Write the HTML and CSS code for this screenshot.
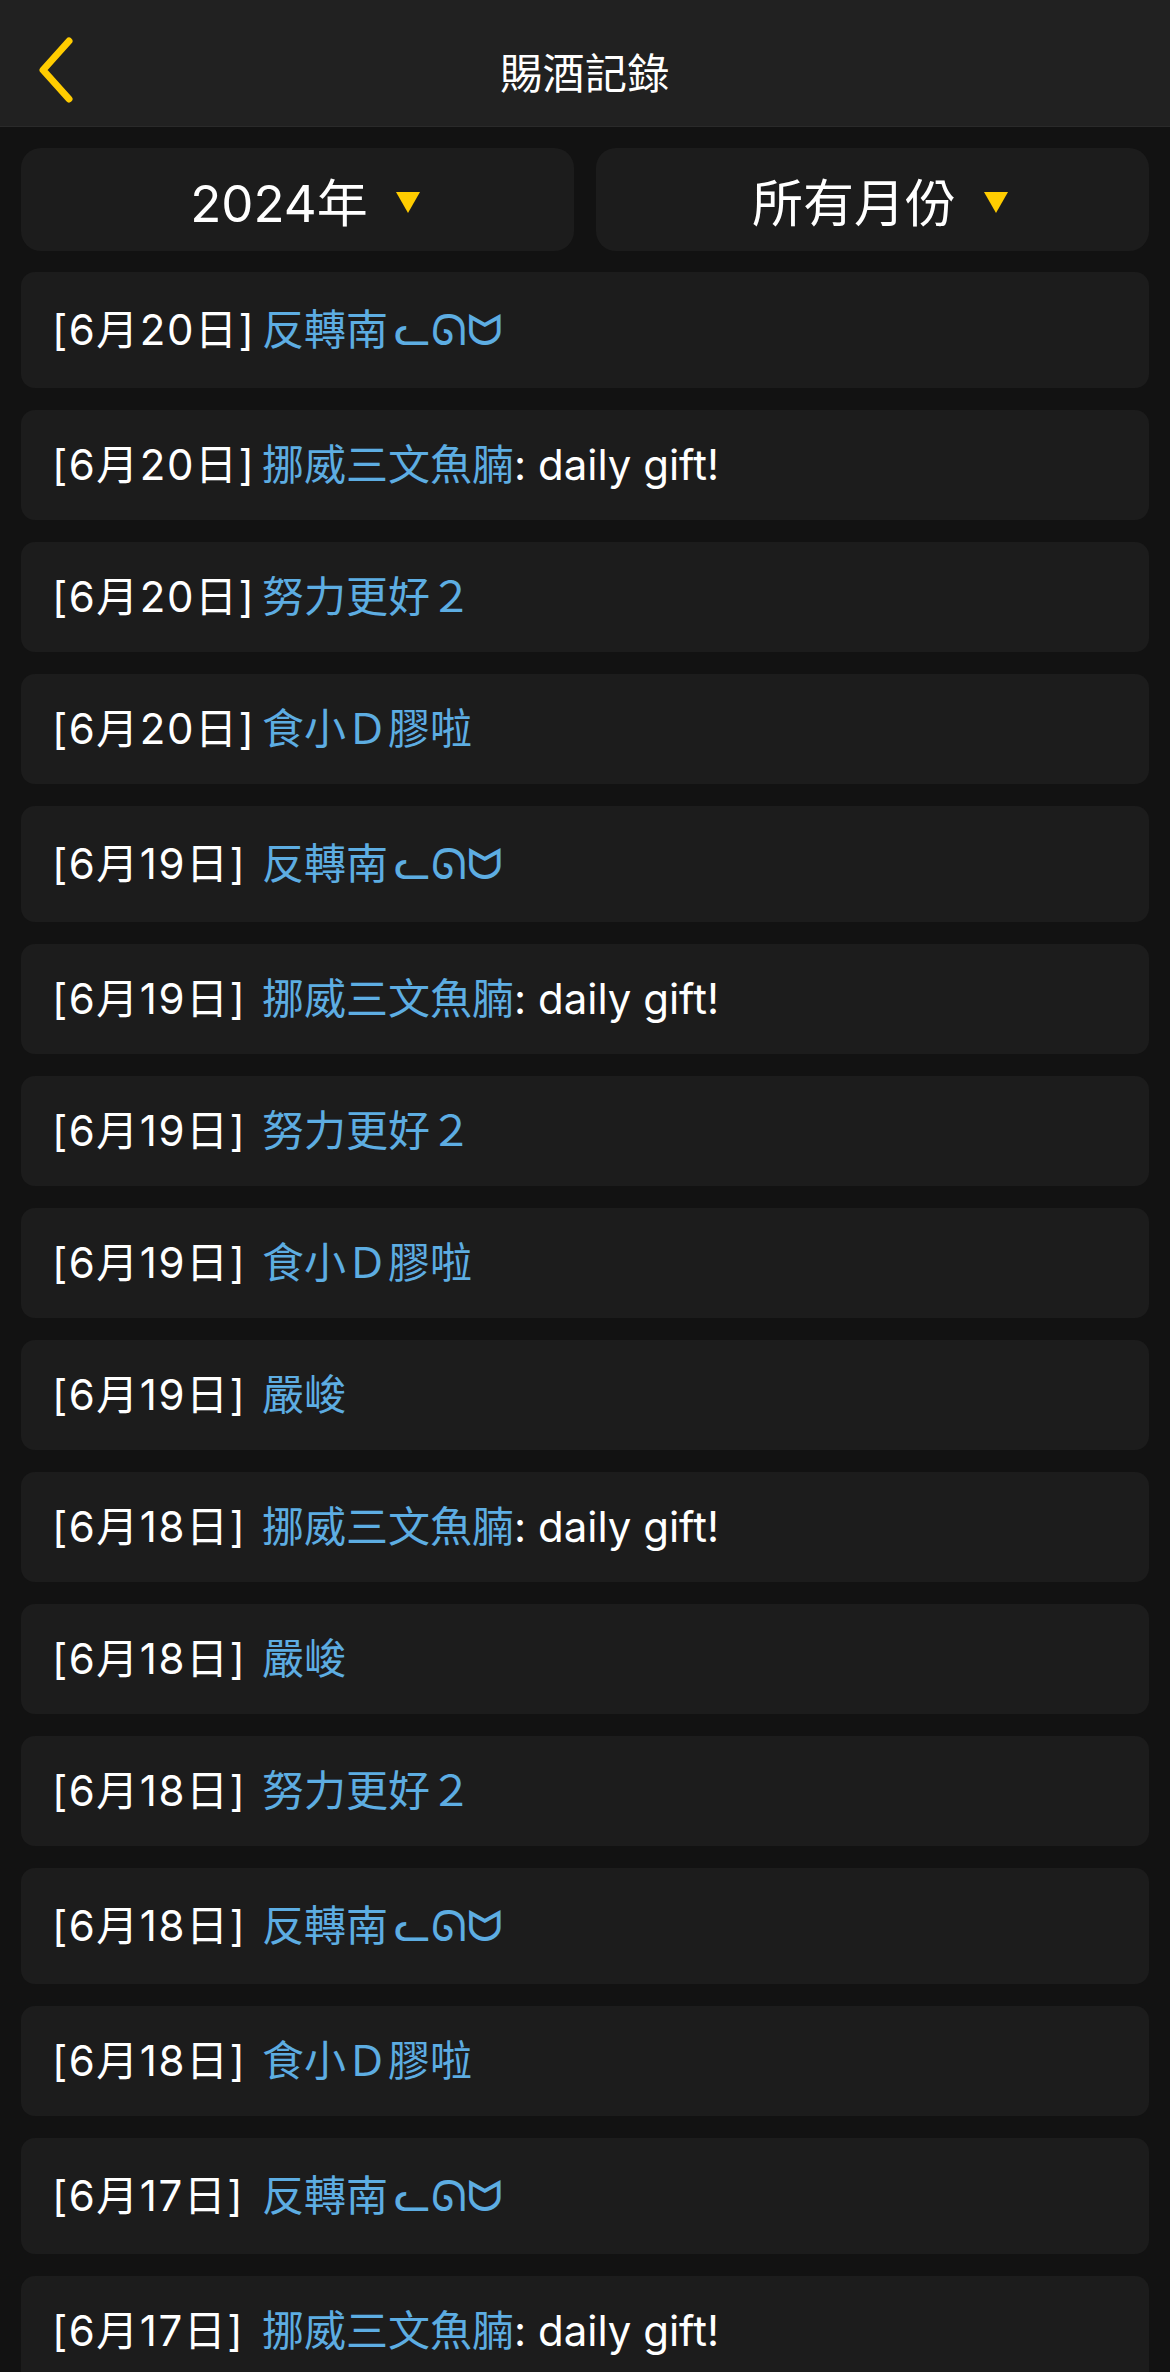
FILE: index.html
```html
<!DOCTYPE html>
<html>
   <head>
        <meta charset="UTF-8">
        <link rel="stylesheet" href="styles.css">
   </head>
   <body>
        <header class="topBar">
            <button class="backButton" aria-label="返回">
                <svg width="36" height="66" viewBox="0 0 36 66">
                    <polyline points="31,4 5,33 31,62" fill="none" stroke="#ffcc00" stroke-width="7" stroke-linecap="round" stroke-linejoin="round"/>
                </svg>
            </button>
            <h1 class="pageTitle">賜酒記錄</h1>
            <span></span>
        </header>

        <div class="filters">
            <button class="filterButton">2024年 <span class="caret"></span></button>
            <button class="filterButton">所有月份 <span class="caret"></span></button>
        </div>

        <div class="entries">
            <div class="entry entryTall"><span class="date">[6月20日]</span><span class="name">反轉南<span class="cat">ᓚᘏᗢ</span></span></div>
            <div class="entry"><span class="date">[6月20日]</span><span class="name">挪威三文魚腩</span>: daily gift!</div>
            <div class="entry"><span class="date">[6月20日]</span><span class="name">努力更好２</span></div>
            <div class="entry"><span class="date">[6月20日]</span><span class="name">食小Ｄ膠啦</span></div>
            <div class="entry entryTall"><span class="date">[6月19日]</span><span class="name">反轉南<span class="cat">ᓚᘏᗢ</span></span></div>
            <div class="entry"><span class="date">[6月19日]</span><span class="name">挪威三文魚腩</span>: daily gift!</div>
            <div class="entry"><span class="date">[6月19日]</span><span class="name">努力更好２</span></div>
            <div class="entry"><span class="date">[6月19日]</span><span class="name">食小Ｄ膠啦</span></div>
            <div class="entry"><span class="date">[6月19日]</span><span class="name">嚴峻</span></div>
            <div class="entry"><span class="date">[6月18日]</span><span class="name">挪威三文魚腩</span>: daily gift!</div>
            <div class="entry"><span class="date">[6月18日]</span><span class="name">嚴峻</span></div>
            <div class="entry"><span class="date">[6月18日]</span><span class="name">努力更好２</span></div>
            <div class="entry entryTall"><span class="date">[6月18日]</span><span class="name">反轉南<span class="cat">ᓚᘏᗢ</span></span></div>
            <div class="entry"><span class="date">[6月18日]</span><span class="name">食小Ｄ膠啦</span></div>
            <div class="entry entryTall"><span class="date">[6月17日]</span><span class="name">反轉南<span class="cat">ᓚᘏᗢ</span></span></div>
            <div class="entry"><span class="date">[6月17日]</span><span class="name">挪威三文魚腩</span>: daily gift!</div>
        </div>
   </body>
</html>
```

FILE: styles.css
```css
html,
body {
    margin: 0;
    background-color: #121212;
    color: white;
    font-family: Inter, "Noto Sans CJK TC", "DejaVu Sans", sans-serif;
    overflow: hidden;
}

.topBar {
    box-sizing: border-box;
    display: grid;
    grid-template-columns: 120px 1fr 120px;
    align-items: center;
    height: 127px;
    padding-top: 14px;
    background-color: #212121;
    border-bottom: 1px solid #2a2a2a;
}

.backButton {
    background: none;
    border: none;
    padding: 0 0 0 38px;
    display: flex;
    align-items: center;
    cursor: pointer;
}

.pageTitle {
    margin: 0;
    text-align: center;
    font-size: 42px;
    font-weight: 400;
    letter-spacing: 0.5px;
}

.filters {
    display: grid;
    grid-template-columns: 1fr 1fr;
    gap: 22px;
    padding: 21px 21px 0;
}

.filterButton {
    height: 103px;
    border: none;
    border-radius: 20px;
    background-color: #1c1c1c;
    color: white;
    font-family: inherit;
    font-size: 51px;
    display: flex;
    align-items: center;
    justify-content: center;
    gap: 28px;
    padding: 0 0 0 15px;
    cursor: pointer;
}

.caret {
    width: 0;
    height: 0;
    border-left: 12px solid transparent;
    border-right: 12px solid transparent;
    border-top: 21px solid #ffcc00;
    margin-top: 6px;
}

.entries {
    display: flex;
    flex-direction: column;
    gap: 22px;
    padding: 21px;
}

.entry {
    background-color: #1c1c1c;
    border-radius: 14px;
    padding: 25px 31px;
    font-size: 42px;
    line-height: 60px;
    white-space: nowrap;
}

.entryTall {
    padding: 28px 31px;
}

.date {
    display: inline-block;
    width: 210px;
    color: white;
    letter-spacing: 1.5px;
}

.name {
    color: #5dade2;
}

.cat {
    font-family: "DejaVu Sans", sans-serif;
    font-size: 43px;
    line-height: 40px;
    margin-left: 6px;
}
```
